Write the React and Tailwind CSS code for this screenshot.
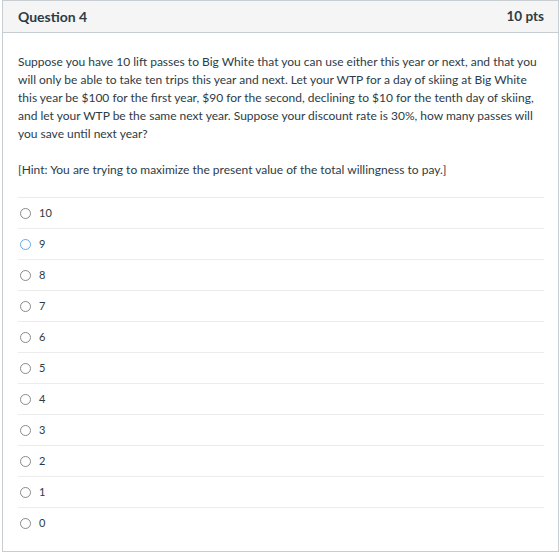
const answers = ["10", "9", "8", "7", "6", "5", "4", "3", "2", "1", "0"];

const Radio = ({ active }) => (
  <span
    className={
      "inline-block w-[11px] h-[11px] rounded-full border bg-white " +
      (active ? "border-[#6aa8e8]" : "border-[#8a8a8a]")
    }
  />
);

export default function App() {
  return (
    <div className="w-[560px] h-[555px] bg-white font-['Lato','Open_Sans',sans-serif] text-[#2d3b45]">
      <div className="ml-[2px] w-[557px] h-[552px] border border-[#c7cdd1] flex flex-col">
        {/* header */}
        <div className="h-[32px] bg-[#f5f5f5] border-b border-[#c7cdd1] flex items-center justify-between pl-[15px] pr-[14px]">
          <h2 className="text-[14px] font-bold">Question 4</h2>
          <span className="text-[13.5px] font-bold">10 pts</span>
        </div>

        {/* body */}
        <div className="pt-[20px] px-[15px]">
          <p className="text-[12px] leading-[18px]">
            Suppose you have 10 lift passes to Big White that you can use either this year or next, and that you
            will only be able to take ten trips this year and next. Let your WTP for a day of skiing at Big White
            this year be $100 for the first year, $90 for the second, declining to $10 for the tenth day of skiing,
            and let your WTP be the same next year. Suppose your discount rate is 30%, how many passes will you
            save until next year?
          </p>
          <p className="mt-[18px] text-[12px] leading-[18px]">
            [Hint: You are trying to maximize the present value of the total willingness to pay.]
          </p>
        </div>

        {/* answers */}
        <div className="mt-[18px] ml-[15px] mr-[14px]">
          {answers.map((a) => (
            <label
              key={a}
              className="h-[31px] border-t border-[#ececec] flex items-center gap-[8px] pl-[2px] text-[11px]"
            >
              <Radio active={a === "9"} />
              <span>{a}</span>
            </label>
          ))}
        </div>
      </div>
    </div>
  );
}
